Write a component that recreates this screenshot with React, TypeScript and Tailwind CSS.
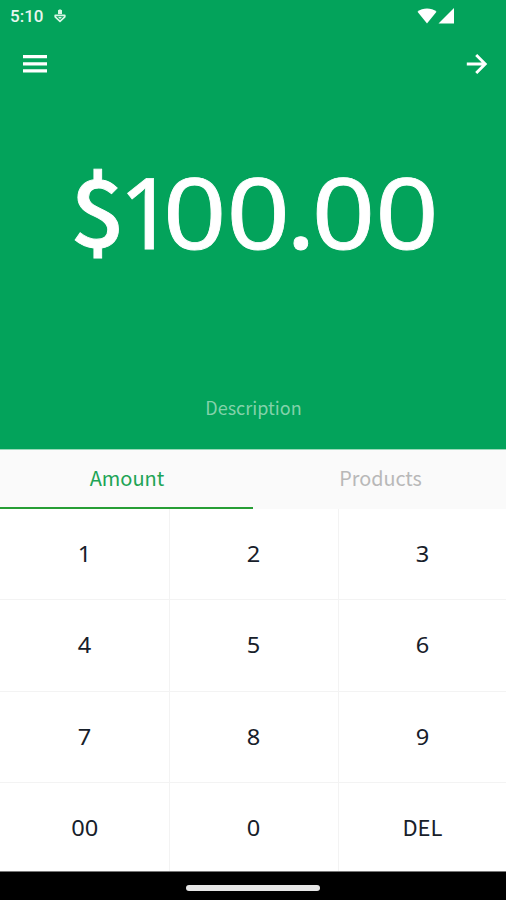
const keys = ["1", "2", "3", "4", "5", "6", "7", "8", "9", "00", "0", "DEL"];

function Header() {
  return (
    <header className="flex h-[449px] flex-col bg-[#03a35b] text-white">
      <div className="flex h-8 items-center pl-[10px] pr-[51px]">
        <span className="font-['Roboto',sans-serif] text-[17px] font-medium leading-8 opacity-90">5:10</span>
        <svg className="ml-[11px] h-[14px] w-3" viewBox="0 0 12 14" fill="none">
          <path d="M4 1.2 6 .2 8 1.2V5H4Z" fill="#d9f5e5" />
          <path d="M1.2 6.3h9.6v1.5L6 12.4 1.2 7.8Z" stroke="#d9f5e5" strokeWidth="1.7" strokeLinejoin="round" />
          <path d="M4 8h4L6 10Z" fill="#d9f5e5" />
        </svg>
        <svg className="ml-auto h-4 w-[38px]" viewBox="0 0 38 16" fill="white">
          <path d="M.5 3.8C5.8-.5 14.2-.5 19.5 3.8L10 15.5Z" />
          <path d="M37 0v15.5H21.5Z" />
        </svg>
      </div>
      <div className="flex h-16 items-center justify-between pl-[23px] pr-[18px]">
        <svg className="h-[18px] w-6" viewBox="0 0 24 18" fill="white">
          <path d="M0 0h24v3.3H0ZM0 7.2h24v3.3H0ZM0 14.3h24v3.3H0Z" />
        </svg>
        <svg className="h-5 w-[22px]" viewBox="0 0 22 20" fill="none" stroke="white" strokeWidth="2.9">
          <path d="M.8 10H19.5M10.2 1 19.2 10 10.2 19" />
        </svg>
      </div>
      <div className="mt-[46px] flex h-[136px] items-center whitespace-nowrap pl-[73px] font-['Noto_Sans',sans-serif] text-[99px] leading-none [-webkit-text-stroke:0.8px_white]">
        <span className="flex w-[49px] scale-x-[1.05] justify-center pb-[7px] font-['Noto_Sans_CJK_SC',sans-serif] text-[92px] font-medium">$</span>
        <span className="-ml-[4px] w-[45px] origin-left scale-x-[0.98]">
          <span className="inline-block w-[45px] pl-[1px]">1</span>
        </span>
        <span className="origin-left scale-x-[1.12]">
          0<span className="tracking-[-3.5px]">0.</span>00
        </span>
      </div>
      <div className="mt-auto pb-[27px] pl-px text-center font-['Noto_Sans_CJK_SC',sans-serif] text-[18px] leading-[30px] text-[#82d2aa]">
        <span className="inline-block">Description</span>
      </div>
    </header>
  );
}

export default function App() {
  return (
    <main className="flex h-[900px] w-[506px] flex-col overflow-hidden bg-white">
      <Header />
      <nav className="grid h-[60px] grid-cols-2 border-t border-[#9bd9b9] bg-[#fafafa] font-['Noto_Sans_CJK_SC',sans-serif] text-[20px]">
        <button className="border-b-2 border-[#279e35] pb-[2px] pl-px text-[#20a455]">Amount</button>
        <button className="pb-[4px] pl-[2px] text-[19.8px] text-[#b8b8b8]">Products</button>
      </nav>
      <section className="grid h-[362px] grid-cols-[169.5px_169.5px_167px] grid-rows-[91px_92px_91px_88px] font-['Noto_Sans',sans-serif] text-[22.5px] text-[#17202a]">
        {keys.map((key, i) => (
          <button
            key={key}
            className={`${i % 3 === 0 ? "pl-px" : ""} ${i < 9 ? "border-b pb-[1px]" : "pt-[1px]"} ${i % 3 < 2 ? "border-r" : ""} border-[#f3f3f3]`}
          >
            <span className={key === "DEL" ? "font-['Noto_Sans_CJK_SC',sans-serif] text-[22px]" : "inline-block scale-x-[1.05]"}>{key}</span>
          </button>
        ))}
      </section>
      <footer className="flex h-[29px] justify-center border-t border-[#777777] bg-black pt-[13px]">
        <div className="h-[6px] w-[134px] rounded-full bg-[#e6e6e6]" />
      </footer>
    </main>
  );
}
